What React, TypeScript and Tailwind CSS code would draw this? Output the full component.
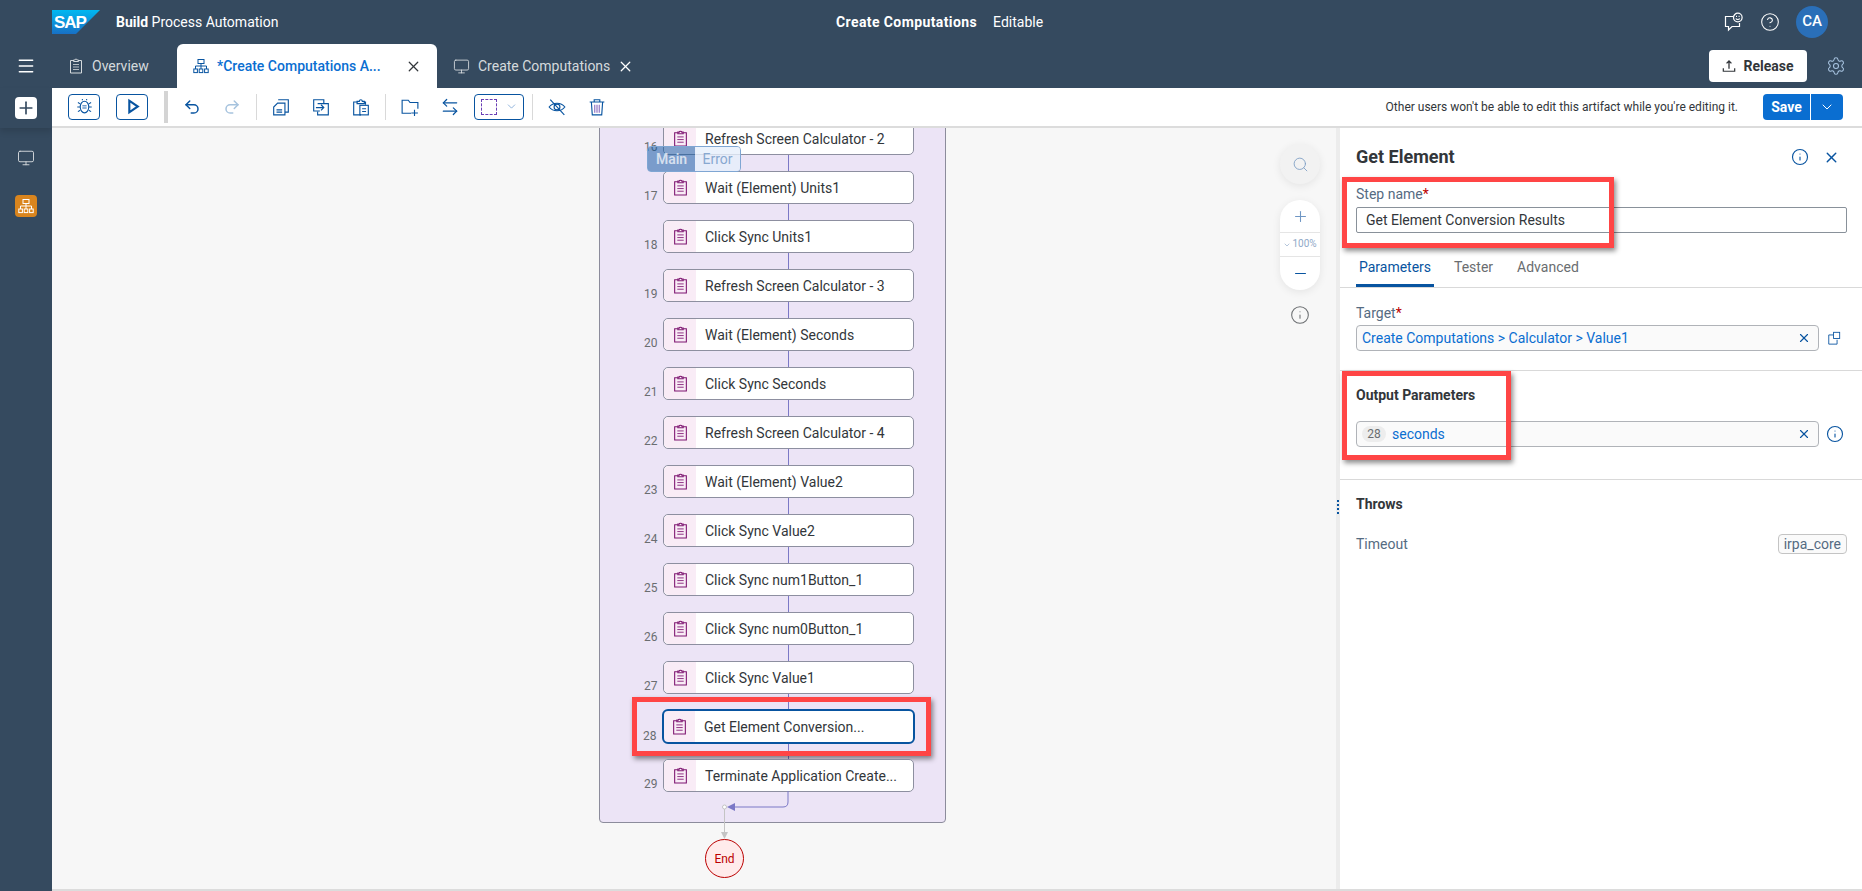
import {
  ArrowLeftRight,
  ChevronDown,
  HelpCircle,
  Info,
  Menu,
  Minus,
  Monitor,
  Plus,
  Redo2,
  Search,
  Settings,
  Undo2,
  X,
} from "lucide-react";

const steps = [
  { n: 16, name: "Refresh Screen Calculator - 2" },
  { n: 17, name: "Wait (Element) Units1" },
  { n: 18, name: "Click Sync Units1" },
  { n: 19, name: "Refresh Screen Calculator - 3" },
  { n: 20, name: "Wait (Element) Seconds" },
  { n: 21, name: "Click Sync Seconds" },
  { n: 22, name: "Refresh Screen Calculator - 4" },
  { n: 23, name: "Wait (Element) Value2" },
  { n: 24, name: "Click Sync Value2" },
  { n: 25, name: "Click Sync num1Button_1" },
  { n: 26, name: "Click Sync num0Button_1" },
  { n: 27, name: "Click Sync Value1" },
  { n: 28, name: "Get Element Conversion...", selected: true },
  { n: 29, name: "Terminate Application Create..." },
];

function Glyph({ className, children }: { className?: string; children: React.ReactNode }) {
  return (
    <svg viewBox="0 0 16 16" fill="none" stroke="currentColor" strokeWidth="1" className={className}>
      {children}
    </svg>
  );
}

function OrgIcon({ className }: { className?: string }) {
  return (
    <Glyph className={className}>
      <rect x="5" y="1.5" width="6" height="4" />
      <path d="M8 5.5V8M2.5 11V8H13.5V11M8 8V11" />
      <rect x="0.8" y="11" width="3.6" height="3.6" />
      <rect x="6.2" y="11" width="3.6" height="3.6" />
      <rect x="11.6" y="11" width="3.6" height="3.6" />
    </Glyph>
  );
}

function ClipIcon({ className }: { className?: string }) {
  return (
    <Glyph className={className}>
      <path d="M5.5 2.5H2.5V15H13.5V2.5H10.5" />
      <path d="M5.5 3.5V2H6.8C7 0.8 9 0.8 9.2 2H10.5V3.5Z" />
      <path d="M5 6.5H11M5 9H11M5 11.5H11" strokeWidth="0.8" />
    </Glyph>
  );
}

function BugIcon({ className }: { className?: string }) {
  return (
    <Glyph className={className}>
      <ellipse cx="8" cy="8.5" rx="4" ry="5.5" />
      <path d="M6 7.2H10M6 9.5H10" strokeWidth="1.4" stroke="#6f9ccb" />
      <path d="M4 5.5L1.8 4.2M4 8.5H1.2M4 11.5L1.8 12.8M12 5.5L14.2 4.2M12 8.5H14.8M12 11.5L14.2 12.8M6 2V1M10 2V1" />
    </Glyph>
  );
}

function FilesIcon({ className }: { className?: string }) {
  return (
    <Glyph className={className}>
      <path d="M5.5 1.5H14.5V12.5H11.5" />
      <path d="M5 4.5H11.5V15H1.5V8Z" />
      <path d="M4 10.5H9M4 12.5H9" />
    </Glyph>
  );
}

function PasteInIcon({ className }: { className?: string }) {
  return (
    <Glyph className={className}>
      <path d="M7 11.5H1.5V1.5H10.5V5" />
      <path d="M5 5H14.5V15H5V12" />
      <path d="M3.5 8.5H10.5M8 6L10.5 8.5L8 11" />
    </Glyph>
  );
}

function PasteIcon({ className }: { className?: string }) {
  return (
    <Glyph className={className}>
      <path d="M8 15H1.5V3.5H5M10.5 3.5H12V6" />
      <path d="M4.5 5V3H6.5C6.7 1 9 1 9.2 3H11V5Z" />
      <rect x="7" y="6.5" width="7.5" height="8.5" />
      <path d="M9 9.5H12.5M9 12H12.5" />
    </Glyph>
  );
}

function FolderAddIcon({ className }: { className?: string }) {
  return (
    <Glyph className={className}>
      <path d="M9 13.5H1V2H6.5L8 4H15V9.5" />
      <path d="M12 10.5V16M9.2 13.3H15" />
    </Glyph>
  );
}

function EyeOffIcon({ className }: { className?: string }) {
  return (
    <Glyph className={className}>
      <path d="M1 8C4.5 3.5 11.5 3.5 15 8C11.5 12.5 4.5 12.5 1 8Z" />
      <circle cx="8" cy="8" r="2.6" />
      <path d="M2 1.5L14.5 15" />
    </Glyph>
  );
}

function TrashIcon({ className }: { className?: string }) {
  return (
    <Glyph className={className}>
      <path d="M1.5 3.5H14.5M5.5 3.5V1.5H10.5V3.5" />
      <path d="M3 3.5L3.8 15H12.2L13 3.5" />
      <path d="M6 6V13M8 6V13M10 6V13" stroke="#8a6cc0" />
    </Glyph>
  );
}

function FeedbackIcon({ className }: { className?: string }) {
  return (
    <svg viewBox="0 0 20 20" fill="none" stroke="currentColor" strokeWidth="1.2" className={className}>
      <path d="M9 4.5H1.5V14.5H4.5V18L8 14.5H15.5V11" />
      <circle cx="13.8" cy="5.5" r="4.3" />
      <path d="M11.8 6.5C12.8 7.8 14.8 7.8 15.8 6.5M12 4.3H13M14.6 4.3H15.6" />
    </svg>
  );
}

function ReleaseIcon({ className }: { className?: string }) {
  return (
    <Glyph className={className}>
      <path d="M8 11V2.5M5.2 5L8 2.2L10.8 5" strokeWidth="1.5" />
      <path d="M1.5 10.5V14H14.5V10.5" strokeWidth="1.4" />
    </Glyph>
  );
}

function CopyLinkIcon({ className }: { className?: string }) {
  return (
    <Glyph className={className}>
      <path d="M7 4.5H2V15H11.5V10" />
      <rect x="7.5" y="1.5" width="7" height="7" />
    </Glyph>
  );
}

function SapLogo() {
  return (
    <svg viewBox="0 0 48 24" className="h-6 w-12">
      <defs>
        <linearGradient id="sapBlue" x1="0" y1="0" x2="0" y2="1">
          <stop offset="0" stopColor="#00b8f1" />
          <stop offset="1" stopColor="#1870c5" />
        </linearGradient>
      </defs>
      <polygon points="0,0 48,0 24,24 0,24" fill="url(#sapBlue)" />
      <text x="2" y="18" fontSize="17" fontWeight="700" fill="#fff" fontFamily="Liberation Sans, sans-serif" letterSpacing="-1">
        SAP
      </text>
    </svg>
  );
}

function ToolIcon({ children, className }: { children: React.ReactNode; className?: string }) {
  return <div className={`flex h-[26px] w-10 items-center justify-center text-[#0854a0] ${className ?? ""}`}>{children}</div>;
}

function Divider() {
  return <div className="mx-1 h-[26px] w-px bg-[#d9d9d9]" />;
}

function Canvas() {
  return (
    <div className="relative flex-1 overflow-hidden bg-[#f7f7f7] pl-[547px]">
      <div className="relative -mt-5 w-[347px] rounded-[4px] border border-[#8c8c9c] bg-[#ece4f6] pb-[30px] pl-[63px] pt-[13px]">
        {steps.map((s, i) => (
          <div key={s.n}>
            <div
              className={`relative flex h-[33px] w-[251px] rounded-[5px] bg-white ${
                s.selected ? "outline-2 -outline-offset-1 outline-[#0854a0]" : "border border-[#8d8fa0]"
              }`}
            >
              <div className="flex w-8 shrink-0 items-center justify-center rounded-l-[5px] bg-[#f9ecf6]">
                <ClipIcon className="h-[17px] w-[17px] text-[#7d1470]" />
              </div>
              <div className="flex items-center pl-[9px] text-sm text-[#32363a]">{s.name}</div>
              <span className="absolute -bottom-[1px] -left-5 text-xs leading-4 text-[#6a6d70]">{s.n}</span>
              {s.selected && (
                <div className="absolute -bottom-[13px] -left-[31px] -right-[17px] -top-[13px] border-[5px] border-[#ff4545] shadow-[2px_3px_5px_rgba(0,0,0,0.45)]" />
              )}
            </div>
            {i < steps.length - 1 && <div className="ml-[125px] h-4 w-px bg-[#7b78c6]" />}
          </div>
        ))}

        <div className="absolute left-[47px] top-[37px] flex h-[26px] w-[94px] overflow-hidden rounded-[4px] border border-[#7fa6d3] text-sm">
          <div className="flex w-[47px] items-center justify-center bg-[#0854a0]/50 font-semibold text-white/70">Main</div>
          <div className="flex flex-1 items-center justify-center bg-[#e6effb]/80 text-[#88a8d0]">Error</div>
        </div>

        <svg viewBox="0 0 80 50" className="absolute left-[120px] top-[682px] h-[50px] w-20 overflow-visible" fill="none">
          <path d="M68 0V11Q68 16 63 16H15" stroke="#7b78c6" />
          <polygon points="7,16 15,12 15,20" fill="#7b78c6" />
          <path d="M4.5 18V42" stroke="#c4c4c4" />
          <polygon points="1,41 8,41 4.5,48" fill="#c4c4c4" />
          <circle cx="4.5" cy="16" r="2" fill="#fff" stroke="#c4c4c4" />
        </svg>
      </div>

      <div className="ml-[106px] mt-4 flex h-[39px] w-[39px] items-center justify-center rounded-full border border-[#bb0000] bg-[#ffebeb] text-xs text-[#bb0000]">
        End
      </div>

      <div className="absolute right-4 top-4 flex h-10 w-10 items-center justify-center rounded-full bg-[#f2f2f2] shadow-[0_2px_8px_rgba(0,0,0,0.08)]">
        <Search size={17} strokeWidth={1.25} className="text-[#7f9fc4]" />
      </div>
      <div className="absolute right-4 top-[72px] flex h-[90px] w-10 flex-col items-center rounded-full bg-white shadow-[0_2px_8px_rgba(0,0,0,0.08)]">
        <div className="flex h-8 items-center">
          <Plus size={17} strokeWidth={1.5} className="text-[#6f96c4]" />
        </div>
        <div className="flex h-[25px] w-full items-center justify-center gap-[1px] border-y border-[#e5e5e5] text-[10px] text-[#8fa9c8]">
          <ChevronDown size={8} />
          100%
        </div>
        <div className="flex h-8 items-center">
          <Minus size={17} strokeWidth={1.5} className="text-[#0854a0]" />
        </div>
      </div>
      <Info size={20} strokeWidth={1.25} className="absolute right-[26px] top-[177px] text-[#6a6d70]" />
    </div>
  );
}

function Panel() {
  return (
    <div className="relative w-[526px] shrink-0 border-l-4 border-[#ececec] bg-white text-sm text-[#32363a]">
      <div className="absolute -left-[3px] top-[372px] flex flex-col gap-[2px]">
        <span className="h-[2px] w-[2px] bg-[#0854a0]" />
        <span className="h-[2px] w-[2px] bg-[#0854a0]" />
        <span className="h-[2px] w-[2px] bg-[#0854a0]" />
        <span className="h-[2px] w-[2px] bg-[#0854a0]" />
      </div>

      <div className="flex h-14 items-center justify-between pl-4 pr-[22px] pt-[2px]">
        <div className="text-lg font-bold">Get Element</div>
        <div className="flex items-center gap-[14px]">
          <Info size={18} strokeWidth={1.5} className="text-[#0854a0]" />
          <X size={17} strokeWidth={2} className="text-[#0854a0]" />
        </div>
      </div>

      <div className="px-4">
        <div className="h-5 leading-5 text-[#556b82]">
          Step name<span className="text-[#bb0000]">*</span>
        </div>
        <div className="mt-[3px] flex h-[26px] w-[491px] items-center rounded-[2px] border border-[#89919a] px-[9px]">
          Get Element Conversion Results
        </div>
      </div>

      <div className="mt-4 flex h-[39px] gap-4 border-b border-[#d9d9d9] pl-4 text-[#6a6d70]">
        <div className="flex w-[78px] items-center justify-center border-b-[3px] border-[#0854a0] text-[#0854a0]">Parameters</div>
        <div className="flex items-center px-1 pb-[3px]">Tester</div>
        <div className="flex items-center px-1 pb-[3px]">Advanced</div>
      </div>

      <div className="h-[83px] border-b border-[#d9d9d9] pl-4 pt-[15px]">
        <div className="h-5 leading-5 text-[#556b82]">
          Target<span className="text-[#bb0000]">*</span>
        </div>
        <div className="mt-[2px] flex items-center">
          <div className="flex h-[26px] w-[463px] items-center justify-between rounded-[4px] border border-[#b0b3b8] bg-[#fafafa] pl-[5px] pr-[7px] text-[#0a6ed1]">
            <span>Create Computations &gt; Calculator &gt; Value1</span>
            <X size={14} strokeWidth={2} className="text-[#0854a0]" />
          </div>
          <CopyLinkIcon className="ml-2 h-[14px] w-[14px] text-[#0854a0]" />
        </div>
      </div>

      <div className="h-[109px] border-b border-[#d9d9d9] pl-4 pt-[14px]">
        <div className="h-5 font-bold leading-5">Output Parameters</div>
        <div className="mt-4 flex items-center">
          <div className="flex h-[26px] w-[463px] items-center rounded-[4px] border border-[#b0b3b8] bg-[#fafafa] pl-[5px] pr-[7px]">
            <span className="flex h-4 w-6 items-center justify-center rounded-full bg-[#ededed] text-xs text-[#6a6d70]">28</span>
            <span className="ml-[6px] text-[#0a6ed1]">seconds</span>
            <X size={14} strokeWidth={2} className="ml-auto text-[#0854a0]" />
          </div>
          <Info size={18} strokeWidth={1.5} className="ml-[7px] text-[#0854a0]" />
        </div>
      </div>

      <div className="pl-4 pr-[15px] pt-[14px]">
        <div className="h-5 font-bold leading-5">Throws</div>
        <div className="mt-[20px] flex items-center justify-between">
          <span className="text-[#556b82]">Timeout</span>
          <span className="flex h-5 items-center rounded-[4px] border border-[#c4c4c4] bg-[#fafafa] px-[5px] text-[#556b82]">irpa_core</span>
        </div>
      </div>

      <div className="absolute left-[2px] top-[49px] h-[71px] w-[272px] border-[5px] border-[#ff4545] shadow-[2px_3px_5px_rgba(0,0,0,0.45)]" />
      <div className="absolute left-[2px] top-[243px] h-[89px] w-[169px] border-[5px] border-[#ff4545] shadow-[2px_3px_5px_rgba(0,0,0,0.45)]" />
    </div>
  );
}

export default function App() {
  return (
    <div className="flex h-[891px] w-[1862px] flex-col overflow-hidden bg-[#354a5f] font-['Roboto',sans-serif] text-sm">
      <div className="flex h-11 shrink-0 items-center text-white">
        <div className="ml-[52px] w-[64px]">
          <SapLogo />
        </div>
        <div className="w-[720px]">
          <span className="font-bold">Build</span> Process Automation
        </div>
        <div className="font-bold tracking-[0.4px]">Create Computations</div>
        <div className="ml-4">Editable</div>
        <div className="ml-auto flex items-center gap-4 pr-[34px]">
          <FeedbackIcon className="h-5 w-5" />
          <HelpCircle size={20} strokeWidth={1.25} />
          <div className="flex h-8 w-8 items-center justify-center rounded-full bg-[#2a6fb8] text-[15px] font-medium">CA</div>
        </div>
      </div>

      <div className="flex h-11 shrink-0 items-end text-[#d5dadd]">
        <div className="flex h-11 w-[52px] items-center justify-center text-white">
          <Menu size={20} strokeWidth={1.75} />
        </div>
        <div className="flex h-11 w-[125px] items-center gap-2 pl-4">
          <ClipIcon className="h-4 w-4" />
          Overview
        </div>
        <div className="flex h-11 w-[260px] items-center rounded-t-[6px] bg-white pl-4 font-medium text-[#0a6ed1]">
          <OrgIcon className="mr-2 h-4 w-4 text-[#0854a0]" />
          <span className="w-[188px]">*Create Computations A...</span>
          <X size={17} strokeWidth={1.75} className="text-[#32363a]" />
        </div>
        <div className="flex h-11 items-center pl-4">
          <Monitor size={17} strokeWidth={1.25} className="mr-2" />
          <span className="w-[139px]">Create Computations</span>
          <X size={17} strokeWidth={1.75} className="text-white" />
        </div>
        <div className="ml-auto flex h-11 items-center gap-[19px] pr-4">
          <div className="flex h-8 w-[98px] items-center justify-center gap-[7px] rounded-[4px] bg-white font-bold text-[#32363a]">
            <ReleaseIcon className="h-[14px] w-[14px]" />
            Release
          </div>
          <Settings size={20} strokeWidth={1.25} className="text-[#a9c5e2]" />
        </div>
      </div>

      <div className="flex min-h-0 flex-1">
        <div className="flex w-[52px] shrink-0 flex-col items-center">
          <div className="flex h-10 w-full items-center justify-center shadow-[0_4px_6px_rgba(0,0,0,0.12)]">
            <div className="flex h-[22px] w-[22px] items-center justify-center rounded-[4px] bg-white text-[#354a5f]">
              <Plus size={20} strokeWidth={2} />
            </div>
          </div>
          <Monitor size={18} strokeWidth={1.25} className="mt-[21px] text-[#d5dadd]" />
          <div className="mt-[28px] flex h-[22px] w-[22px] items-center justify-center rounded-[4px] bg-[#d9851e] text-white">
            <OrgIcon className="h-4 w-4" />
          </div>
        </div>

        <div className="flex min-w-0 flex-1 flex-col bg-white">
          <div className="flex h-10 shrink-0 items-center border-b-2 border-[#dcdcdc] pb-[1px] pl-4">
            <div className="flex h-[26px] w-8 items-center justify-center rounded-[4px] border border-[#0854a0] text-[#0854a0]">
              <BugIcon className="h-[17px] w-[17px]" />
            </div>
            <div className="ml-4 flex h-[26px] w-8 items-center justify-center rounded-[4px] border border-[#0854a0] text-[#0854a0]">
              <svg viewBox="0 0 16 16" fill="none" stroke="currentColor" strokeWidth="2" className="h-[17px] w-[17px]">
                <path d="M5 2.5V13.5L13 8Z" />
              </svg>
            </div>
            <div className="ml-4 h-8 w-1 bg-[#d4d4d4]" />
            <div className="ml-[4px] flex items-center">
              <ToolIcon>
                <Undo2 size={18} strokeWidth={2} />
              </ToolIcon>
              <ToolIcon className="!text-[#a6c3de]">
                <Redo2 size={18} strokeWidth={2} />
              </ToolIcon>
              <Divider />
              <ToolIcon>
                <FilesIcon className="h-[18px] w-[18px]" />
              </ToolIcon>
              <ToolIcon>
                <PasteInIcon className="h-[18px] w-[18px]" />
              </ToolIcon>
              <ToolIcon>
                <PasteIcon className="h-[18px] w-[18px]" />
              </ToolIcon>
              <Divider />
              <ToolIcon>
                <FolderAddIcon className="h-[18px] w-[18px]" />
              </ToolIcon>
              <ToolIcon>
                <ArrowLeftRight size={20} strokeWidth={1.5} />
              </ToolIcon>
              <div className="ml-1 flex h-[26px] w-[50px] items-center justify-center gap-2 rounded-[4px] border border-[#0854a0]">
                <div className="h-4 w-4 border border-dashed border-[#6a3fb5]" />
                <ChevronDown size={13} strokeWidth={1.25} className="text-[#5f93cc]" />
              </div>
              <div className="ml-2 mr-1 h-[26px] w-px bg-[#d9d9d9]" />
              <ToolIcon>
                <EyeOffIcon className="h-[18px] w-[18px]" />
              </ToolIcon>
              <ToolIcon>
                <TrashIcon className="h-[18px] w-[18px]" />
              </ToolIcon>
            </div>
            <div className="ml-auto text-xs text-[#32363a]">Other users won't be able to edit this artifact while you're editing it.</div>
            <div className="ml-[25px] mr-[19px] flex h-[26px] w-20 overflow-hidden rounded-[4px] bg-[#0a6ed1] text-white">
              <div className="flex w-12 items-center justify-center border-r border-white font-bold">Save</div>
              <div className="flex flex-1 items-center justify-center">
                <ChevronDown size={16} strokeWidth={1.5} />
              </div>
            </div>
          </div>

          <div className="flex min-h-0 flex-1 border-b-2 border-[#dcdcdc]">
            <Canvas />
            <Panel />
          </div>
        </div>
      </div>
    </div>
  );
}
